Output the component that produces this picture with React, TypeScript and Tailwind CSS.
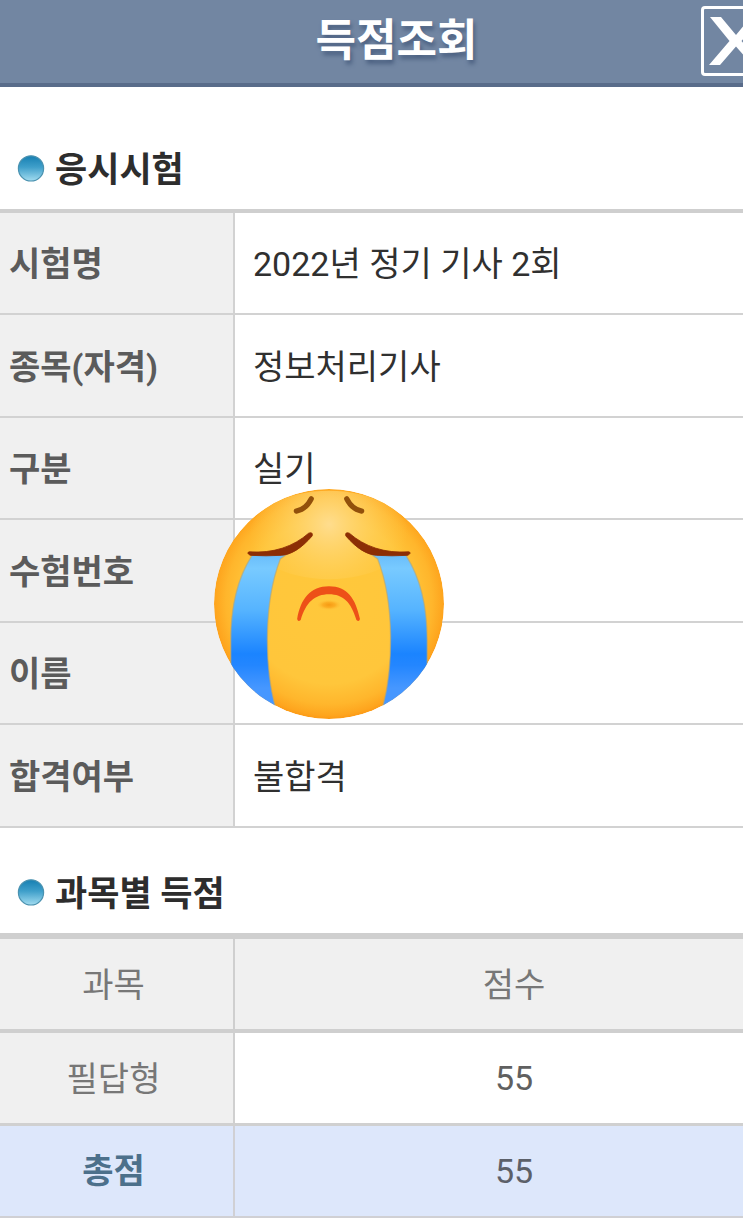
const examRows = [
    { label: "시험명", value: "2022년 정기 기사 2회" },
    { label: "종목(자격)", value: "정보처리기사" },
    { label: "구분", value: "실기" },
    { label: "수험번호", value: "" },
    { label: "이름", value: "" },
    { label: "합격여부", value: "불합격" },
];

function Bullet() {
    return (
        <svg viewBox="0 0 28 28" className="h-7 w-7 shrink-0" aria-hidden="true">
            <defs>
                <linearGradient id="bullet-fill" x1="0" y1="0" x2="0" y2="1">
                    <stop offset="0" stopColor="#167fb2" />
                    <stop offset="0.45" stopColor="#3f9fca" />
                    <stop offset="1" stopColor="#a2dcf0" />
                </linearGradient>
            </defs>
            <circle cx="14" cy="13.4" r="12.6" fill="url(#bullet-fill)" stroke="#4a92b0" strokeWidth="1.2" />
        </svg>
    );
}

function SectionTitle({ children }: { children: string }) {
    return (
        <h2 className="flex h-20 items-center gap-2.5 pl-[17px] text-[35px] leading-none font-bold text-[#2d2d2d]">
            <Bullet />
            <span className="pt-0.5">{children}</span>
        </h2>
    );
}

function CryingFace({ className }: { className: string }) {
    return (
        <svg viewBox="0 0 260 260" className={className} role="img" aria-label="우는 얼굴">
            <defs>
                <radialGradient id="face" gradientUnits="userSpaceOnUse" cx="130" cy="127" r="137">
                    <stop offset="0" stopColor="#ffc83b" />
                    <stop offset="0.68" stopColor="#ffc63b" />
                    <stop offset="0.85" stopColor="#ffb62c" />
                    <stop offset="0.94" stopColor="#fea51e" />
                    <stop offset="1" stopColor="#fb8f0c" />
                </radialGradient>
                <radialGradient id="shine" gradientUnits="userSpaceOnUse" cx="130" cy="40" r="90">
                    <stop offset="0" stopColor="#ffde92" stopOpacity="0.95" />
                    <stop offset="0.5" stopColor="#ffd468" stopOpacity="0.6" />
                    <stop offset="1" stopColor="#ffcd50" stopOpacity="0" />
                </radialGradient>
                <linearGradient id="tear" gradientUnits="userSpaceOnUse" x1="0" y1="64" x2="0" y2="225">
                    <stop offset="0" stopColor="#60b4f7" />
                    <stop offset="0.16" stopColor="#78caff" />
                    <stop offset="0.45" stopColor="#56b4ff" />
                    <stop offset="0.76" stopColor="#1b84ff" />
                    <stop offset="0.84" stopColor="#2386ff" />
                    <stop offset="1" stopColor="#4697ff" />
                </linearGradient>
                <radialGradient id="chin">
                    <stop offset="0" stopColor="#f69912" />
                    <stop offset="0.5" stopColor="#fba71d" stopOpacity="0.8" />
                    <stop offset="1" stopColor="#ffc038" stopOpacity="0" />
                </radialGradient>
                <clipPath id="face-clip">
                    <circle cx="130" cy="130" r="130" />
                </clipPath>
            </defs>
            <g clipPath="url(#face-clip)">
                <circle cx="130" cy="130" r="130" fill="url(#face)" />
                <ellipse cx="130" cy="52" rx="90" ry="50" fill="url(#shine)" />
                {[false, true].map((flipped) => (
                    <g key={String(flipped)} transform={flipped ? "translate(260 0) scale(-1 1)" : undefined}>
                        <path
                            d="M43 75C27 100 19 130 19 171V205L35 245H69C58 205 55 130 75 79L82 74Z"
                            fill="url(#tear)"
                            stroke="#bda66d"
                            strokeOpacity="0.6"
                            strokeWidth="1.5"
                        />
                        <path
                            d="M40 71C67 73 90 65 107 50Q112 48 111 53C98 68 87 74 76 75Q59 76 41 75Q36 72 40 71Z"
                            fill="#8c2e05"
                            stroke="#8c2e05"
                            strokeWidth="1"
                        />
                        <path d="M93 25Q104 23 110 11" fill="none" stroke="#92500b" strokeWidth="5.8" strokeLinecap="round" />
                    </g>
                ))}
                <ellipse cx="130" cy="131" rx="14" ry="6" fill="url(#chin)" />
                <path
                    d="M94 147C98 124 109 110 130 110S160 124 165 147Q164 151 161 148C155 128 146 119 130 119S104 128 98 148Q95 151 94 147Z"
                    fill="#ed5018"
                />
            </g>
        </svg>
    );
}

export default function App() {
    return (
        <div className="w-full overflow-hidden bg-white font-[Roboto,'Noto_Sans_CJK_KR',sans-serif] text-[34px] leading-10">
            {/* The sheet runs a little past the right edge of the screen */}
            <div className="w-[calc(100%+50px)]">
                <header className="grid grid-cols-[1fr_auto_1fr] border-b-4 border-[#596c8a] bg-[#7286a2] px-[22px] pt-1.5 pb-[7px]">
                    <h1 className="col-start-2 pt-0.5 text-[44px] leading-[66px] font-bold text-white [text-shadow:2px_4px_4px_#4b6081]">
                        득점조회
                    </h1>
                    <button
                        type="button"
                        aria-label="닫기"
                        className="flex h-[70px] w-[70px] items-center justify-center justify-self-end rounded-sm border-[3px] border-white"
                    >
                        <svg viewBox="0 0 54 50" className="h-[50px] w-[54px]" aria-hidden="true">
                            <path
                                d="M1 1H12L27 19L42 1H53L32.5 25L54 49H43L27 30.5L11 49H0L20.5 25Z"
                                fill="white"
                            />
                        </svg>
                    </button>
                </header>

                <section className="pt-[42px]">
                    <SectionTitle>응시시험</SectionTitle>
                    <div className="relative">
                        <table className="w-full table-fixed border-separate border-spacing-0 border-t-4 border-[#cfcfcf] text-left">
                            <tbody>
                                {examRows.map(({ label, value }) => (
                                    <tr key={label} className="h-[102px] even:h-[103px]">
                                        <th
                                            scope="row"
                                            className="w-[235px] border-r-2 border-b-2 border-[#d2d2d2] bg-[#f0f0f0] pt-0.5 pl-[9px] font-bold text-[#5b5b5b]"
                                        >
                                            {label}
                                        </th>
                                        <td className="border-b-2 border-[#d2d2d2] pt-0.5 pl-[18px] text-[#303030]">{value}</td>
                                    </tr>
                                ))}
                            </tbody>
                        </table>
                        <CryingFace className="absolute top-[280px] left-[214px] h-[230px] w-[230px]" />
                    </div>
                </section>

                <section className="pt-[25px]">
                    <SectionTitle>과목별 득점</SectionTitle>
                    <table className="w-full table-fixed border-separate border-spacing-0 border-t-6 border-[#cfcfcf] text-center text-[#777777]">
                        <thead>
                            <tr className="h-[94px] bg-[#f0f0f0]">
                                <th scope="col" className="w-[235px] border-r-2 border-b-4 border-[#cfcfcf] pt-0.5 pr-1.5 font-normal">
                                    과목
                                </th>
                                <th scope="col" className="border-b-4 border-[#cfcfcf] pt-0.5 font-normal">
                                    점수
                                </th>
                            </tr>
                        </thead>
                        <tbody>
                            <tr className="h-[93px]">
                                <th scope="row" className="border-r-2 border-b-3 border-[#d0d0d0] bg-[#f0f0f0] pt-0.5 pr-1.5 font-normal">
                                    필답형
                                </th>
                                <td className="border-b-3 border-[#d0d0d0] text-[#606060]">55</td>
                            </tr>
                            <tr className="h-[92px] bg-[#dde7fb]">
                                <th scope="row" className="border-r-2 border-b-2 border-[#d0d0d4] pr-1.5 font-bold text-[#4c708b]">
                                    총점
                                </th>
                                <td className="border-b-2 border-[#d0d0d4] text-[#5c6069]">55</td>
                            </tr>
                        </tbody>
                    </table>
                </section>
            </div>
        </div>
    );
}
